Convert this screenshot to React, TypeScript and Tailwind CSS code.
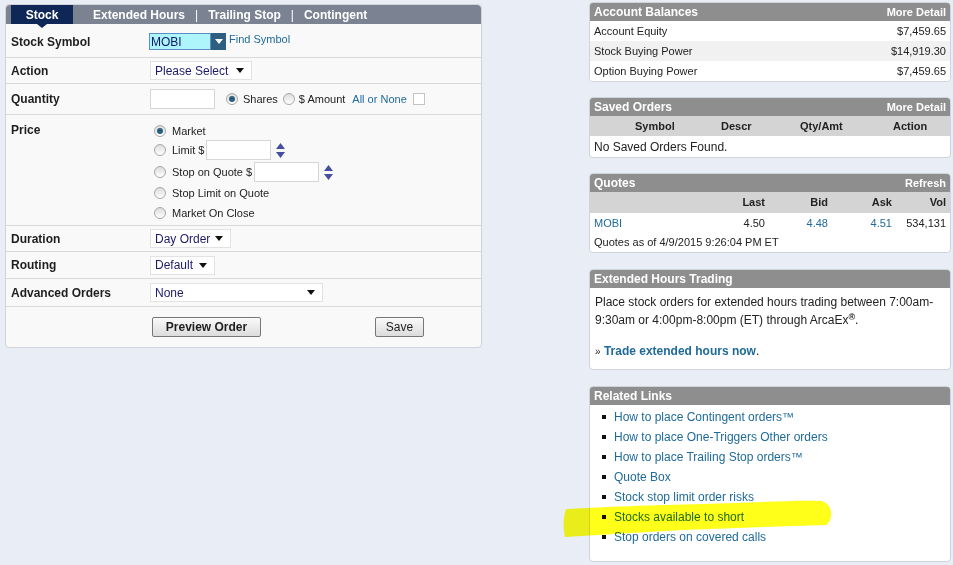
import React from 'react';

const font = { fontFamily: '"Liberation Sans", Arial, sans-serif' };

function Caret() {
  return (
    <svg width="8" height="5" viewBox="0 0 8 5" className="shrink-0">
      <path d="M0 0 L8 0 L4 5 Z" fill="#111" />
    </svg>
  );
}

function Select({ label, width }: { label: string; width: string }) {
  return (
    <div
      className={`flex h-[19px] items-center justify-between border border-[#e2e2e2] bg-white pl-[4px] pr-[7px] text-[12px] text-[#1c1a6b] ${width}`}
    >
      <span>{label}</span>
      <Caret />
    </div>
  );
}

function Radio({ checked = false }: { checked?: boolean }) {
  return (
    <span className="flex h-[12px] w-[12px] shrink-0 items-center justify-center rounded-full border border-[#a8a8a8] bg-gradient-to-b from-[#dcdcdc] to-white">
      {checked && <span className="h-[6px] w-[6px] rounded-full bg-[#2a5f7c]" />}
    </span>
  );
}

function Spinner() {
  return (
    <svg width="9" height="17" viewBox="0 0 9 17" className="shrink-0">
      <path d="M0 7 L4.5 1 L9 7 Z" fill="#454ea0" />
      <path d="M0 10 L4.5 16 L9 10 Z" fill="#454ea0" />
    </svg>
  );
}

function Row({
  label,
  children,
  className = '',
  top = false,
}: {
  label: string;
  children: React.ReactNode;
  className?: string;
  top?: boolean;
}) {
  return (
    <div className={`flex border-b border-[#d9d9d9] ${top ? 'items-start' : 'items-center'} ${className}`}>
      <div className={`w-[144px] shrink-0 pl-[5px] text-[12px] font-bold text-[#1e1e1e] ${top ? 'pt-[6px]' : ''}`}>
        {label}
      </div>
      <div className="flex items-center">{children}</div>
    </div>
  );
}

function OrderPanel() {
  return (
    <div className="mt-[2px] w-[477px] rounded-[4px] border border-[#cfd3da] bg-[#f9f9f9]">
      {/* tab bar */}
      <div className="relative flex h-[19px] items-center rounded-t-[4px] bg-[#7b8393] text-[12px] font-bold text-white">
        <div className="relative ml-[5px] flex h-full w-[62px] items-center justify-center bg-[#0e2757]">
          Stock
          <span className="absolute -bottom-[4px] left-1/2 h-0 w-0 -translate-x-1/2 border-l-[5px] border-r-[5px] border-t-[4px] border-l-transparent border-r-transparent border-t-[#0e2757]" />
        </div>
        <span className="ml-[20px]">Extended Hours</span>
        <span className="mx-[10px] font-normal">|</span>
        <span>Trailing Stop</span>
        <span className="mx-[10px] font-normal">|</span>
        <span>Contingent</span>
      </div>

      <Row label="Stock Symbol" className="h-[34px] pt-[2px]">
        <div className="-ml-[1px] flex h-[17px] w-[62px] items-center border border-[#5b8fc4] bg-[#aef4fb] pl-[1px] text-[12px] text-[#0d1a6b]">
          MOBI
        </div>
        <div className="flex h-[17px] w-[15px] items-center justify-center bg-[#2f5f80]">
          <svg width="8" height="5" viewBox="0 0 8 5">
            <path d="M0 0 L8 0 L4 5 Z" fill="#fff" />
          </svg>
        </div>
        <a className="-mt-[5px] ml-[3px] text-[11px] text-[#1f6a99]">Find Symbol</a>
      </Row>

      <Row label="Action" className="h-[26px]">
        <Select label="Please Select" width="w-[102px]" />
      </Row>

      <Row label="Quantity" className="h-[31px]">
        <div className="h-[20px] w-[65px] border border-[#d6d6d6] bg-white" />
        <span className="ml-[11px]">
          <Radio checked />
        </span>
        <span className="ml-[5px] text-[11px] text-[#222]">Shares</span>
        <span className="ml-[5px]">
          <Radio />
        </span>
        <span className="ml-[4px] text-[11px] text-[#222]">$ Amount</span>
        <a className="ml-[7px] text-[11px] text-[#1f6a99]">All or None</a>
        <span className="ml-[6px] h-[12px] w-[12px] border border-[#c4c4c4] bg-white" />
      </Row>

      <Row label="Price" top className="h-[111px]">
        <div className="flex flex-col pl-[4px] pt-[9px] text-[11px] text-[#222]">
          <div className="flex h-[14px] items-center gap-[6px]">
            <Radio checked />
            <span>Market</span>
          </div>
          <div className="mt-[2px] flex h-[20px] items-center gap-[6px]">
            <Radio />
            <span>Limit $</span>
            <div className="-ml-[4px] h-[20px] w-[65px] border border-[#d6d6d6] bg-white" />
            <span className="-ml-[1px]">
              <Spinner />
            </span>
          </div>
          <div className="mt-[2px] flex h-[20px] items-center gap-[6px]">
            <Radio />
            <span>Stop on Quote $</span>
            <div className="-ml-[4px] h-[20px] w-[65px] border border-[#d6d6d6] bg-white" />
            <span className="-ml-[1px]">
              <Spinner />
            </span>
          </div>
          <div className="mt-[1px] flex h-[20px] items-center gap-[6px]">
            <Radio />
            <span>Stop Limit on Quote</span>
          </div>
          <div className="flex h-[20px] items-center gap-[6px]">
            <Radio />
            <span>Market On Close</span>
          </div>
        </div>
      </Row>

      <Row label="Duration" className="h-[26px]">
        <Select label="Day Order" width="w-[81px]" />
      </Row>
      <Row label="Routing" className="h-[27px]">
        <Select label="Default" width="w-[65px]" />
      </Row>
      <Row label="Advanced Orders" className="h-[28px]">
        <Select label="None" width="w-[173px]" />
      </Row>

      <div className="flex h-[40px] items-center pl-[146px]">
        <button className="h-[20px] w-[109px] rounded-[2px] border border-[#777] bg-gradient-to-b from-[#fafafa] to-[#dcdcdc] text-[12px] font-bold text-[#1e1e1e]">
          Preview Order
        </button>
        <button className="ml-[114px] h-[20px] w-[49px] rounded-[2px] border border-[#777] bg-gradient-to-b from-[#fafafa] to-[#dcdcdc] text-[12px] text-[#1e1e1e]">
          Save
        </button>
      </div>
    </div>
  );
}

function Panel({
  title,
  right,
  children,
}: {
  title: string;
  right?: string;
  children: React.ReactNode;
}) {
  return (
    <div className="overflow-hidden rounded-[4px] border border-[#cfd3da] bg-white">
      <div className="flex h-[18px] items-center justify-between bg-[#8e8e8e] px-[4px] text-white">
        <span className="text-[12px] font-bold">{title}</span>
        {right && <span className="text-[11px] font-bold">{right}</span>}
      </div>
      {children}
    </div>
  );
}

const balances = [
  ['Account Equity', '$7,459.65'],
  ['Stock Buying Power', '$14,919.30'],
  ['Option Buying Power', '$7,459.65'],
];

const links = [
  'How to place Contingent orders™',
  'How to place One-Triggers Other orders',
  'How to place Trailing Stop orders™',
  'Quote Box',
  'Stock stop limit order risks',
  'Stocks available to short',
  'Stop orders on covered calls',
];

export default function App() {
  return (
    <div className="relative flex min-h-screen items-start bg-[#e9edf5] pl-[5px] pt-[2px]" style={font}>
      <OrderPanel />

      <div className="ml-[107px] flex w-[362px] flex-col">
        <Panel title="Account Balances" right="More Detail">
          {balances.map(([k, v], i) => (
            <div
              key={k}
              className={`flex h-[20px] items-center justify-between px-[4px] text-[11px] text-[#222] ${
                i === 1 ? 'bg-[#f1f1f1]' : 'bg-white'
              }`}
            >
              <span>{k}</span>
              <span>{v}</span>
            </div>
          ))}
        </Panel>

        <div className="mt-[15px]">
          <Panel title="Saved Orders" right="More Detail">
            <div className="flex h-[20px] items-center bg-[#d4d4d4] pl-[45px] text-[11px] font-bold text-[#222]">
              <span className="w-[86px]">Symbol</span>
              <span className="w-[79px]">Descr</span>
              <span className="w-[93px]">Qty/Amt</span>
              <span>Action</span>
            </div>
            <div className="flex h-[21px] items-center px-[4px] text-[12px] text-[#222]">No Saved Orders Found.</div>
          </Panel>
        </div>

        <div className="mt-[15px]">
          <Panel title="Quotes" right="Refresh">
            <div className="grid h-[21px] grid-cols-[110px_70px_63px_64px_54px] items-center bg-[#d4d4d4] text-[11px] font-bold text-[#222]">
              <span />
              <span className="pr-[5px] text-right">Last</span>
              <span className="pr-[5px] text-right">Bid</span>
              <span className="pr-[5px] text-right">Ask</span>
              <span className="pr-[5px] text-right">Vol</span>
            </div>
            <div className="grid h-[20px] grid-cols-[110px_70px_63px_64px_54px] items-center text-[11px]">
              <a className="pl-[4px] text-[#1f6a99]">MOBI</a>
              <span className="pr-[5px] text-right text-[#222]">4.50</span>
              <span className="pr-[5px] text-right text-[#1f6a99]">4.48</span>
              <span className="pr-[5px] text-right text-[#1f6a99]">4.51</span>
              <span className="pr-[5px] text-right text-[#222]">534,131</span>
            </div>
            <div className="flex h-[19px] items-start px-[4px] pt-[1px] text-[11px] text-[#222]">
              Quotes as of 4/9/2015 9:26:04 PM ET
            </div>
          </Panel>
        </div>

        <div className="mt-[16px]">
          <Panel title="Extended Hours Trading">
            <div className="px-[5px] pb-[8px] pt-[5px] text-[12px] leading-[18px] text-[#222]">
              <p className="whitespace-nowrap">
                Place stock orders for extended hours trading between 7:00am-
                <br />
                9:30am or 4:00pm-8:00pm (ET) through ArcaEx<sup className="text-[9px] font-bold">®</sup>.
              </p>
              <p className="mt-[13px]">
                <span className="text-[10px]">»</span>{' '}
                <a className="font-bold text-[#1f6a99]">Trade extended hours now</a>.
              </p>
            </div>
          </Panel>
        </div>

        <div className="mt-[16px]">
          <Panel title="Related Links">
            <ul className="pb-[14px] pt-[2px]">
              {links.map((l) => (
                <li key={l} className="flex h-[20px] items-center pl-[12px] text-[12px] text-[#1f6a99]">
                  <span className="mr-[8px] h-[4px] w-[4px] bg-[#111]" />
                  <a>{l}</a>
                </li>
              ))}
            </ul>
          </Panel>
        </div>
      </div>

      {/* yellow marker highlight */}
      <svg
        className="pointer-events-none absolute left-[563px] top-[498px] mix-blend-multiply"
        width="272"
        height="42"
        viewBox="0 0 272 42"
      >
        <path
          d="M3 11 C40 9 90 7 140 6 C190 5 230 2 258 3 C270 5 271 22 263 27 C220 28 180 30 120 32 C80 34 40 37 2 39 C0 30 0 20 3 11 Z"
          fill="#ffff1a"
        />
      </svg>
    </div>
  );
}
